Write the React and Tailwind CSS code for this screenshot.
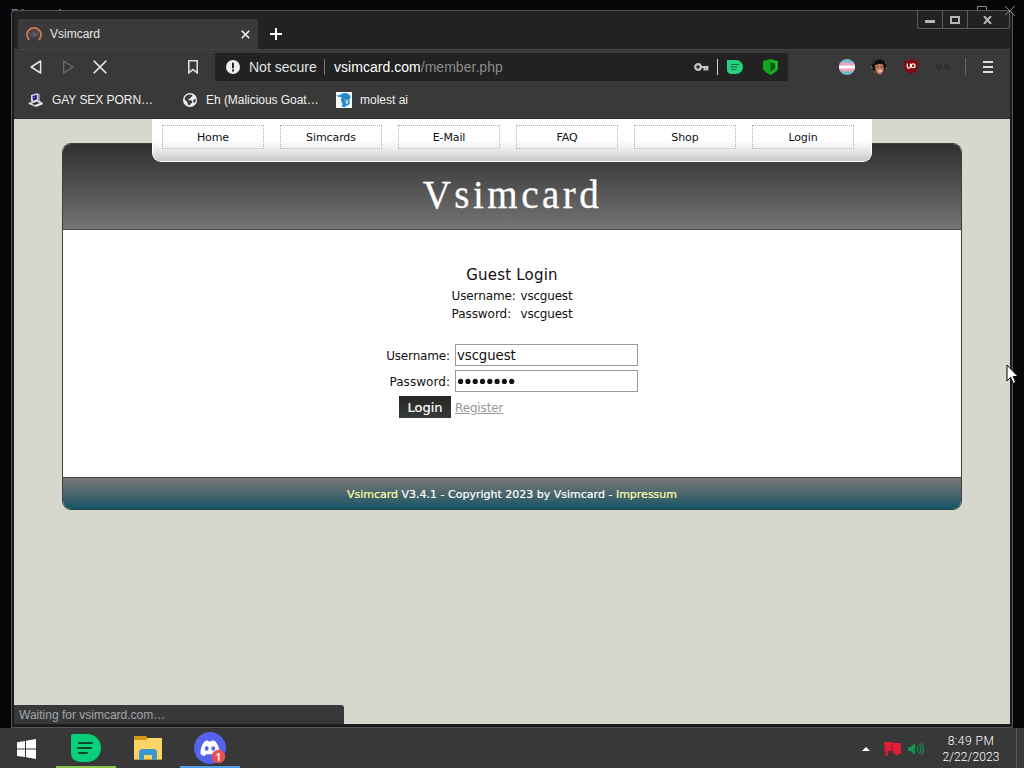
import React from "react";

const NAV = ["Home", "Simcards", "E-Mail", "FAQ", "Shop", "Login"];

function TabStrip() {
  return (
    <div className="flex h-[38px] justify-between bg-[#222222]">
      <div className="flex items-end">
        <div className="ml-1 flex h-[30px] w-[240px] items-center rounded-t-[3px] bg-[#3a3a3a] pl-2">
          <svg width="16" height="16" viewBox="0 0 16 16" fill="none">
            <path d="M3.2 14A7 7 0 1 1 12.8 14" stroke="#c9795a" strokeWidth="1.8" />
            <path d="M5 12A4.6 4.6 0 1 1 11.5 11.2" stroke="#7a5048" strokeWidth="1" />
            <circle cx="8" cy="8.5" r="3.2" fill="#50525f" />
            <path d="M7 7l3 3" stroke="#777" strokeWidth="1" />
          </svg>
          <span className="ml-2 w-[191px] text-[12px] text-[#e6e6e6]">Vsimcard</span>
          <svg width="9" height="9" viewBox="0 0 9 9" stroke="#f0f0f0" strokeWidth="1.6">
            <path d="M.7.7l7.6 7.6M8.3.7L.7 8.3" />
          </svg>
        </div>
        <svg className="mb-[9px] ml-3" width="12" height="12" viewBox="0 0 12 12" stroke="#fff" strokeWidth="2">
          <path d="M6 0v12M0 6h12" />
        </svg>
      </div>
      <div className="flex h-[18px] w-[93px] rounded-b-[3px] border border-t-0 border-[#5c5c5c]">
        <div className="flex w-[25px] items-center justify-center border-r border-[#5c5c5c] pt-1">
          <svg width="10" height="3" viewBox="0 0 10 3"><path d="M0 0h10v3H0z" fill="#b5b5b5" /></svg>
        </div>
        <div className="flex w-[25px] items-center justify-center border-r border-[#5c5c5c]">
          <svg width="10" height="8" viewBox="0 0 10 8"><path d="M1 1h8v6H1z" fill="none" stroke="#b5b5b5" strokeWidth="2" /></svg>
        </div>
        <div className="flex flex-1 items-center justify-center pr-[2px]">
          <svg width="9" height="8" viewBox="0 0 9 8"><path d="M1 0l7 8M8 0L1 8" stroke="#b5b5b5" strokeWidth="2" /></svg>
        </div>
      </div>
    </div>
  );
}

function Toolbar() {
  return (
    <div className="flex h-[36px] items-center border-t border-[#444] bg-[#393939] pb-[2px]">
      <svg className="ml-4" width="13" height="14" viewBox="0 0 13 14" fill="none" stroke="#e8e8e8" strokeWidth="1.5" strokeLinejoin="round">
        <path d="M10.6 1L1.2 7l9.4 6z" />
      </svg>
      <svg className="ml-[19px]" width="13" height="14" viewBox="0 0 13 14" fill="none" stroke="#6c6c6c" strokeWidth="1.4" strokeLinejoin="round">
        <path d="M1.6 1L11 7l-9.4 6z" />
      </svg>
      <svg className="ml-[18px]" width="14" height="14" viewBox="0 0 14 14" stroke="#ececec" strokeWidth="1.6">
        <path d="M.7.7l12.6 12.6M13.3.7L.7 13.3" />
      </svg>
      <svg className="ml-[81px]" width="10" height="14" viewBox="0 0 10 14" fill="none" stroke="#dedede" strokeWidth="1.6">
        <path d="M.8.8h8.4v12L5 9.6.8 12.8z" />
      </svg>
      <div className="ml-[17px] flex h-[28px] w-[573px] items-center rounded-[3px] bg-[#222222]">
        <svg className="ml-[11px]" width="14" height="14" viewBox="0 0 14 14">
          <circle cx="7" cy="7" r="7" fill="#eeeeee" />
          <path d="M6 2.8h2v5.4H6zM6 9.4h2v2H6z" fill="#222" />
        </svg>
        <span className="ml-[9px] w-[68px] whitespace-nowrap pt-[2px] text-[14px] text-[#e4e4e4]">Not secure</span>
        <span className="ml-[7px] h-4 w-px bg-[#777]" />
        <span className="ml-[9px] w-[360px] whitespace-nowrap pt-[2px] text-[14px] tracking-[0.03px] text-[#8c8c8c]">
          <span className="text-white">vsimcard.com</span>/member.php
        </span>
        <svg width="15" height="8" viewBox="0 0 15 8" fill="none" stroke="#c6c6c6">
          <circle cx="4" cy="4" r="2.8" strokeWidth="2.2" />
          <path d="M7 4h7.5M10.6 4v3.5M13.2 4v3.5" strokeWidth="2.2" />
        </svg>
        <span className="ml-[8px] h-4 w-px bg-[#d0d0d0]" />
        <svg className="ml-[9px]" width="16" height="14" viewBox="0 0 16 14">
          <path d="M0 0h9a7 7 0 0 1 0 14H4.5Q.5 14 0 10z" fill="#25d07e" />
          <path d="M4 4.500h8M3.500 7h7M4.500 9.500h5" stroke="#116b42" strokeWidth="1.1" />
        </svg>
        <svg className="ml-[20px]" width="15" height="16" viewBox="0 0 15 16">
          <path d="M0 2L7.500 0 15 2v8q-1.500 3-7.500 6Q1.500 13 0 10z" fill="#12a61c" />
          <path d="M7.500 1.300L14 3v6.500q-1.500 2.500-6.500 5z" fill="#2fb83a" />
          <path d="M7.500 3L12.300 4.300v4.700q-1 2-4.800 4z" fill="#0a5f14" />
        </svg>
      </div>
      <svg className="ml-[51px]" width="16" height="16" viewBox="0 0 16 16">
        <clipPath id="flag"><circle cx="8" cy="8" r="8" /></clipPath>
        <g clipPath="url(#flag)">
          <path d="M0 0h16v16H0z" fill="#6dbccb" />
          <path d="M0 3.500h16v9H0z" fill="#e6a6c0" />
          <path d="M0 6.500h16v3H0z" fill="#fff" />
        </g>
      </svg>
      <svg className="ml-[16px]" width="16" height="16" viewBox="0 0 16 16">
        <path d="M1 7Q0 3 4 2q4-3 8-.5Q16 3 15 8l-2 4H3z" fill="#15100e" />
        <path d="M4 6.500Q7 4 12 5.500l.8 5q-1 4-3.800 5Q6 15 4.500 11z" fill="#c98063" />
        <path d="M5.500 8h2M9.500 8h2" stroke="#4b241a" />
        <path d="M6 11q2.500 1 5.500 0-1.500 3.500-5.500 0z" fill="#fff" />
        <path d="M2 4h1M0 8h1M14 4h1M15 9h1M3 13h1" stroke="#d08a4a" />
      </svg>
      <svg className="ml-[17px]" width="14" height="15" viewBox="0 0 14 15">
        <path d="M7 0q3 2 7 2v5q0 5-7 8Q0 12 0 7V2q4 0 7-2z" fill="#850811" />
        <path d="M3.200 4.500v3q0 1.600 1.600 1.600t1.600-1.600v-3" stroke="#fff" strokeWidth="1.200" fill="none" />
        <circle cx="9.200" cy="6.800" r="1.900" stroke="#fff" strokeWidth="1.200" fill="none" />
      </svg>
      <svg className="ml-[18px]" width="14" height="6" viewBox="0 0 14 6" fill="none" stroke="#282828" strokeWidth="1.200">
        <path d="M.8 0v5M3 1v5M5.200 0v5M9 0v5M11 1v5M13.200 0v5" />
      </svg>
      <span className="ml-[15px] h-[17px] w-px bg-[#686868]" />
      <svg className="ml-[17px]" width="10" height="12" viewBox="0 0 10 12" stroke="#dddddd" strokeWidth="1.800">
        <path d="M0 1h10M0 6h10M0 11h10" />
      </svg>
    </div>
  );
}

function Bookmarks() {
  return (
    <div className="flex h-[34px] items-center border-b border-[#303030] bg-[#393939] pb-1 text-[12px] text-[#f0f0f0]">
      <svg className="ml-[14px]" width="16" height="16" viewBox="0 0 16 16">
        <path d="M3 3l6-1.800L12 2.500v6l-6 2-3-1.500z" fill="#dcdce4" />
        <path d="M4.500 4l4.300-1.200v4.800L5 8.600z" fill="#18146e" />
        <path d="M5.500 4.800l1.500-.4v1.600l-1.500.4z" fill="#6a68d0" />
        <path d="M10 1.500l2 1v6l-2 .5z" fill="#8585a0" />
        <path d="M.5 11l3.500-1.500 2 1 5-2 4 2.500-.5 1.500-6.500 2.500-7.500-3z" fill="#d0d0da" />
        <path d="M4 11.500l5-1.500 2.500 1-5 2z" fill="#25252c" />
        <path d="M8 14l6-2.700" stroke="#f8f8f8" />
      </svg>
      <span className="ml-2 w-[118px] whitespace-nowrap text-[12px] tracking-[-0.04px]">GAY SEX PORN…</span>
      <svg className="ml-[13px]" width="14" height="14" viewBox="0 0 14 14">
        <circle cx="7" cy="7" r="7" fill="#ededed" />
        <path d="M5.500 1.600q3.500-.6 4 .8.200 1.400-1.500 1.600-.2 1.500-1.500 1.700Q5 6 5.200 7q1.500.2 3 .3 1.300.4 1 1.900-.2 1.300-1.700 1.500-.2 1.700-1.500 1.600-1.600-.4-1.400-2.500-.8-.8-1.500-2L1.500 6.300Q2 2.800 5.500 1.600z" fill="#3c3c3c" />
        <path d="M12.500 5.500q.6 2.500-.9 4.400-.7-.9-1.700-1.200.2-2.200 2.600-3.200z" fill="#3c3c3c" />
      </svg>
      <span className="ml-[9px] w-[130px] whitespace-nowrap tracking-[-0.04px]">Eh (Malicious Goat…</span>
      <svg width="16" height="16" viewBox="0 0 16 16">
        <path d="M0 0h16v16H0z" fill="#f6fafc" />
        <path d="M0 3.500q4 0 5.500-1.500 5-2.500 8.500 1.500l.5 2.500L13.500 7v5l-2 1.500H9.500L10 15H6l.5-3L5 8.500l.5-3.500Q3 5.500 0 3.500z" fill="#2088c9" />
        <path d="M8 7l1.500 1L12.500 7.500l-.5 4-2 .5z" fill="#b7dbef" />
        <path d="M9 9h1M11.500 9h1" stroke="#124e78" />
      </svg>
      <span className="ml-2 whitespace-nowrap">molest ai</span>
    </div>
  );
}

function Page() {
  return (
    <div className="relative h-[605px] bg-[#d6d7cd] font-['DejaVu_Sans',sans-serif] text-[#111]">
      <div className="relative z-10 mx-auto flex h-[43px] w-[720px] gap-4 rounded-b-[9px] border border-t-0 border-white bg-linear-to-b from-white from-50% via-[#eeeeee] via-70% to-[#c8c8c8] pl-[9px] pt-[6px]">
        {NAV.map((n) => (
          <div key={n} className="h-6 w-[102px] border border-dotted border-[#b4b4b4] pt-px text-center text-[11px] leading-[22px] tracking-[-0.1px]">
            {n}
          </div>
        ))}
      </div>
      <div className="mx-auto -mt-[19px] w-[900px] overflow-hidden rounded-[9px] border border-[#3f3f3f] bg-white">
        <div className="h-[86px] border-b border-[#484848] bg-linear-to-b from-[#303030] to-[#757575] pl-px pt-[27px] text-center font-['Liberation_Serif',serif] text-[39px] leading-[48px] tracking-[3.5px] text-white [-webkit-text-stroke:0.3px]">
          Vsimcard
        </div>
        <div className="h-[247px] pt-[35px]">
          <div className="text-center text-[15px] leading-[20px] tracking-[0.2px]">Guest Login</div>
          <div className="ml-[388.500px] mt-[2px] grid grid-cols-[69px_100px] text-[12px] leading-[18px] tracking-[-0.2px]">
            <span className="tracking-[-0.1px]">Username:</span><span>vscguest</span>
            <span className="tracking-[-0.050px]">Password:</span><span>vscguest</span>
          </div>
          <div className="ml-[316px] mt-[21px] grid grid-cols-[72px_183px] grid-rows-[22px_22px_22px] gap-x-1 gap-y-1 text-[12px]">
            <span className="self-center pr-px pt-px text-right tracking-[-0.15px]">Username:</span>
            <span className="flex items-center border border-[#999] pl-px pt-px text-[13.33px] tracking-[-0.1px]">vscguest</span>
            <span className="self-center pr-px pt-px text-right tracking-[0.05px]">Password:</span>
            <span className="flex items-center border border-[#999] pl-px">
              <svg width="60" height="8" viewBox="0 0 60 8" fill="#111">
                {[0, 1, 2, 3, 4, 5, 6, 7].map((i) => (
                  <circle key={i} cx={3.6 + i * 7.3} cy="4.4" r="2.6" />
                ))}
              </svg>
            </span>
            <button className="ml-5 w-[52px] bg-linear-to-b from-[#262626] to-[#3a3b3b] pt-px text-[13px] text-white [-webkit-text-stroke:0.2px]">Login</button>
            <span className="self-center pt-px text-[#999] underline tracking-[-0.15px]">Register</span>
          </div>
        </div>
        <div className="h-[32px] border-t border-[#444] bg-linear-to-b from-[#797777] to-[#075564] pt-px text-center text-[11px] leading-[32px] text-white [-webkit-text-stroke:0.2px]">
          <span className="text-[#ffffaa]">Vsimcard</span> V3.4.1 - Copyright 2023 by Vsimcard - <span className="text-[#ffffaa]">Impressum</span>
        </div>
      </div>
      <div className="absolute bottom-0 left-0 h-[19px] w-[330px] rounded-tr-[3px] bg-[#36383a] pl-[5px] font-['Liberation_Sans',sans-serif] text-[12px] leading-[20px] text-[#a5a5a5]">
        Waiting for vsimcard.com…
      </div>
    </div>
  );
}

function Taskbar() {
  return (
    <div className="flex h-10 bg-[#383838]">
      <div className="flex w-14 items-center pl-[17px] pt-[2px]">
        <svg width="19" height="20" viewBox="0 0 19 20" fill="#fff">
          <path d="M0 3.200l8-1.300v7.600H0zM9 1.700L19 0v9.500H9zM0 10.500h8v7.600l-8-1.200zM9 10.500h10V20L9 18.300z" />
        </svg>
      </div>
      <div className="flex w-[60px] items-start justify-center border-b-2 border-[#8bc34a] pt-[6px]">
        <svg width="30" height="28" viewBox="0 0 30 28">
          <path d="M0 2Q0 0 2 0h14a14 14 0 0 1 0 28H9Q0 27 0 19z" fill="#08cf79" />
          <path d="M8 9h13M7 14h13M8 19h8" stroke="#07452c" strokeWidth="2" strokeLinecap="round" />
        </svg>
      </div>
      <div className="flex w-16 justify-center pt-[8px]">
        <svg width="28" height="24" viewBox="0 0 28 24">
          <path d="M0 0h12l2 3h14v21H0z" fill="#d39b16" />
          <path d="M0 4h12l2-2h14v21H0z" fill="#fbd366" />
          <path d="M5 24V15l2-2h14l2 2v9h-5v-5h-8v5z" fill="#3c98cc" />
        </svg>
      </div>
      <div className="flex w-[60px] justify-center border-b-2 border-[#4c9fe8] pt-[4px]">
        <svg width="32" height="32" viewBox="0 0 32 32">
          <circle cx="16" cy="16" r="16" fill="#5562ea" />
          <path d="M10.500 9.500q2-1 3.500-1.200l.6 1.200h2.800l.6-1.200q1.500.2 3.500 1.200 4.500 6 4 12.500-2 1.800-4.500 2l-1-1.800-8 0-1 1.800q-2.500-.2-4.500-2-.5-6.500 4-12.500z" fill="#fff" />
          <ellipse cx="12.700" cy="16.500" rx="1.900" ry="2.200" fill="#5562ea" />
          <ellipse cx="19.300" cy="16.500" rx="1.900" ry="2.200" fill="#5562ea" />
          <circle cx="24.500" cy="24.500" r="6.800" fill="#e9504f" />
          <text x="24.500" y="28.500" textAnchor="middle" fontSize="11" fontWeight="600" fill="#fff" fontFamily="Noto Sans, sans-serif">1</text>
        </svg>
      </div>
      <div className="ml-auto flex items-center">
        <svg className="mt-[2px]" width="8" height="4" viewBox="0 0 8 4"><path d="M0 4l4-4 4 4z" fill="#fff" /></svg>
        <svg className="ml-[14px] mt-[2px]" width="17" height="17" viewBox="0 0 17 17">
          <path d="M0 1h8l1 1h8v11h-3l-2 2-1-3-2 1V9l-4 1-1 1v4H1z" fill="#e01d33" />
          <path d="M2 10v5M8 3v5" stroke="#8d1c29" />
        </svg>
        <svg className="ml-[7px] mt-[2px]" width="16" height="14" viewBox="0 0 16 14" fill="none" stroke="#11884b" strokeWidth="1.400">
          <path d="M0 5h3l4-4v12L3 9H0z" fill="#159553" stroke="none" />
          <path d="M9 4.500q2 2.500 0 5M11 2.500q4 4.500 0 9M13 1q5 6 0 12" />
        </svg>
        <div className="ml-[12px] mt-[2px] w-[70px] text-center font-['Roboto',sans-serif] text-[12px] font-light leading-4 text-white">
          <div className="whitespace-nowrap tracking-[0.5px]">8:49 PM</div>
          <div className="whitespace-nowrap tracking-[0.1px]">2/22/2023</div>
        </div>
        <div className="ml-[10px] h-full w-2 border-l border-[#5a5a5a]" />
      </div>
    </div>
  );
}

function Cursor() {
  return (
    <svg className="absolute left-[1006px] top-[364px] z-20" width="13" height="21" viewBox="0 0 13 21">
      <path d="M1 1v16l3.700-3.600 2.500 6 2.600-1.100-2.500-5.800H12z" fill="#fff" stroke="#000" strokeWidth="1" />
    </svg>
  );
}

export default function App() {
  return (
    <div className="relative flex h-[768px] w-[1024px] flex-col overflow-hidden bg-[#040607] font-['Liberation_Sans',Arial,sans-serif]">
      <div className="absolute left-[11px] top-[7px] text-[13px] font-bold leading-[14px] tracking-[0.4px] text-[#777]">Discord</div>
      <svg className="absolute left-[976px] top-[5px] z-10" width="40" height="11" viewBox="0 0 40 11" fill="none" stroke="#8c8c8c">
        <path d="M1.500 5V1.500h9V5M29 1l10 10M39 1L29 10" />
      </svg>
      <div className="relative ml-[11px] mt-[10px] h-[718px] w-[1002px] rounded-t-[4px] border border-[#565656] bg-[#1c1c1c] px-[2px]">
        <TabStrip />
        <Toolbar />
        <Bookmarks />
        <Page />
      </div>
      <Taskbar />
      <Cursor />
    </div>
  );
}
